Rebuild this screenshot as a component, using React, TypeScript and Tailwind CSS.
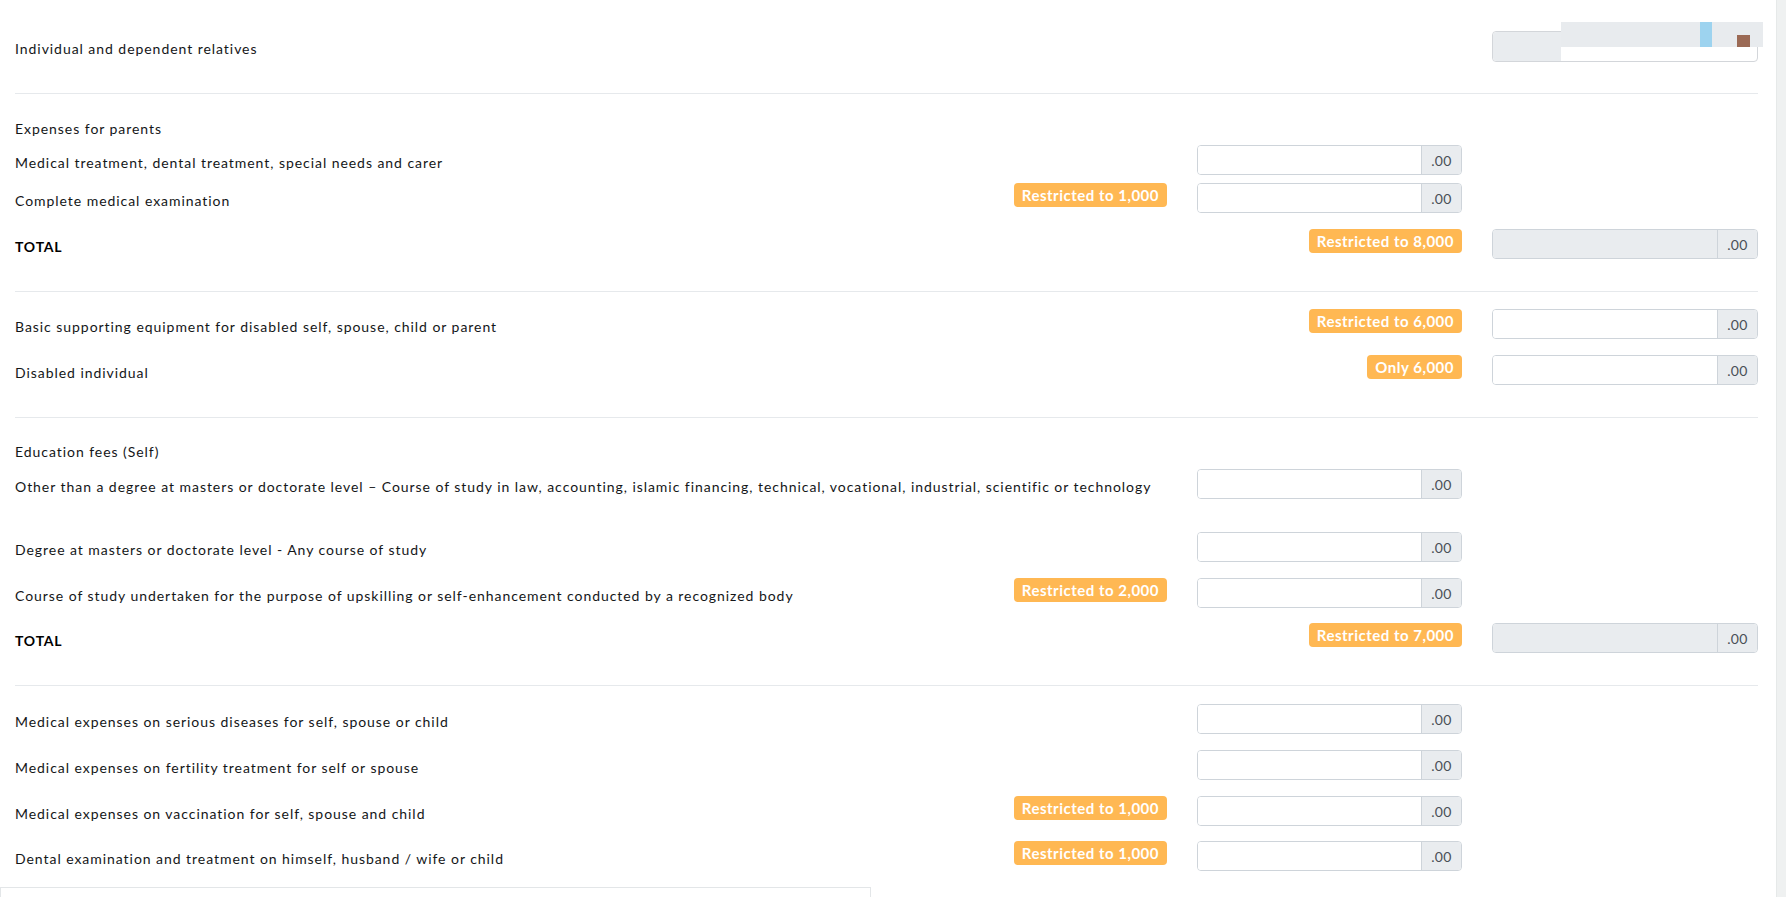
import React from "react";

type Row = {
  label: string;
  bold?: boolean;
  badgeB?: string;
  inputC?: boolean;
  badgeC?: string;
  inputD?: "input" | "readonly";
  mt: string;
};

const Badge = ({ text }: { text: string }) => (
  <span className="inline-block h-[24px] px-[8px] rounded-[4px] bg-[#ffb853] text-white font-bold text-[15px] leading-[24px] whitespace-nowrap tracking-[0.5px]">
    {text}
  </span>
);

const MoneyInput = ({ readOnly }: { readOnly?: boolean }) => (
  <div className="flex h-[30px] w-full border border-[#ced4da] rounded-[4px] overflow-hidden">
    <input
      readOnly={readOnly}
      className={
        readOnly
          ? "flex-1 min-w-0 bg-[#e9ecef] outline-none px-2 text-[14px]"
          : "flex-1 min-w-0 bg-white outline-none px-2 text-[14px]"
      }
    />
    <span className="w-[40px] shrink-0 border-l border-[#ced4da] bg-[#e9ecef] flex items-center justify-center text-[14px] text-[#495057] tracking-[0.3px]">
      .00
    </span>
  </div>
);

const FormRow = ({ row }: { row: Row }) => (
  <div className={`flex items-start ${row.mt}`}>
    <div
      className={
        row.bold
          ? "flex-1 min-w-0 pt-[7px] leading-[21px] text-[14px] font-bold text-black tracking-[0.8px]"
          : "flex-1 min-w-0 pt-[7px] leading-[21px] text-[14px] text-[#141618] tracking-[0.95px]"
      }
    >
      {row.label}
    </div>
    <div className="shrink-0 mr-[30px]">{row.badgeB && <Badge text={row.badgeB} />}</div>
    <div className="shrink-0 w-[265px] flex justify-end">
      {row.inputC && <MoneyInput />}
      {row.badgeC && <Badge text={row.badgeC} />}
    </div>
    <div className="shrink-0 w-[266px] ml-[30px]">
      {row.inputD && <MoneyInput readOnly={row.inputD === "readonly"} />}
    </div>
  </div>
);

const Heading = ({ text, mt }: { text: string; mt: string }) => (
  <div className={`${mt} pt-[7px] leading-[21px] text-[14px] text-[#141618] tracking-[0.95px]`}>
    {text}
  </div>
);

const Divider = ({ mt }: { mt: string }) => <div className={`${mt} h-px bg-[#e6e9ec]`} />;

export default function App() {
  return (
    <div
      className="flex w-[1786px] h-[897px] overflow-hidden bg-white"
      style={{ fontFamily: "Lato, 'Open Sans', sans-serif" }}
    >
      <div className="flex-1 min-w-0">
        <div className="pl-[15px] pr-[18px] pt-[31px]">
          {/* individual */}
          <div className="flex items-start h-[31px]">
            <div className="flex-1 pt-[7px] leading-[21px] text-[14px] text-[#141618] tracking-[0.95px]">
              Individual and dependent relatives
            </div>
            <div className="relative w-[266px] h-[31px] border border-[#d3d6da] rounded-[4px] bg-white">
              <div className="w-[68px] h-full bg-[#e9ecef] rounded-l-[4px]" />
              <div className="absolute left-[68px] top-[-10px] w-[202px] h-[25px] bg-[#e8ebee]">
                <div className="absolute left-[139px] top-0 w-[12px] h-full bg-[#9dd3ef]" />
                <div className="absolute left-[176px] top-[13px] w-[13px] h-[12px] bg-[#9b6a55]" />
              </div>
            </div>
          </div>

          <Divider mt="mt-[31px]" />

          {/* parents */}
          <Heading text="Expenses for parents" mt="mt-[17px]" />
          <FormRow row={{ label: "Medical treatment, dental treatment, special needs and carer", inputC: true, mt: "mt-[6px]" }} />
          <FormRow row={{ label: "Complete medical examination", badgeB: "Restricted to 1,000", inputC: true, mt: "mt-[8px]" }} />
          <FormRow row={{ label: "TOTAL", bold: true, badgeC: "Restricted to 8,000", inputD: "readonly", mt: "mt-[16px]" }} />

          <Divider mt="mt-[32px]" />

          {/* disabled */}
          <FormRow row={{ label: "Basic supporting equipment for disabled self, spouse, child or parent", badgeC: "Restricted to 6,000", inputD: "input", mt: "mt-[17px]" }} />
          <FormRow row={{ label: "Disabled individual", badgeC: "Only 6,000", inputD: "input", mt: "mt-[16px]" }} />

          <Divider mt="mt-[32px]" />

          {/* education */}
          <Heading text="Education fees (Self)" mt="mt-[16px]" />
          <FormRow
            row={{
              label:
                "Other than a degree at masters or doctorate level – Course of study in law, accounting, islamic financing, technical, vocational, industrial, scientific or technology",
              inputC: true,
              mt: "mt-[7px]",
            }}
          />
          <FormRow row={{ label: "Degree at masters or doctorate level - Any course of study", inputC: true, mt: "mt-[33px]" }} />
          <FormRow
            row={{
              label: "Course of study undertaken for the purpose of upskilling or self-enhancement conducted by a recognized body",
              badgeB: "Restricted to 2,000",
              inputC: true,
              mt: "mt-[16px]",
            }}
          />
          <FormRow row={{ label: "TOTAL", bold: true, badgeC: "Restricted to 7,000", inputD: "readonly", mt: "mt-[15px]" }} />

          <Divider mt="mt-[32px]" />

          {/* medical */}
          <FormRow row={{ label: "Medical expenses on serious diseases for self, spouse or child", inputC: true, mt: "mt-[18px]" }} />
          <FormRow row={{ label: "Medical expenses on fertility treatment for self or spouse", inputC: true, mt: "mt-[16px]" }} />
          <FormRow row={{ label: "Medical expenses on vaccination for self, spouse and child", badgeB: "Restricted to 1,000", inputC: true, mt: "mt-[16px]" }} />
          <FormRow
            row={{
              label: "Dental examination and treatment on himself, husband / wife or child",
              badgeB: "Restricted to 1,000",
              inputC: true,
              mt: "mt-[15px]",
            }}
          />
        </div>

        <div className="mt-[16px] w-[871px] h-[40px] border border-[#e3e6e8]" />
      </div>

      {/* scrollbar strip */}
      <div className="w-[10px] shrink-0 bg-[#eff1f1] border-l border-[#e6e9e9]" />
    </div>
  );
}
